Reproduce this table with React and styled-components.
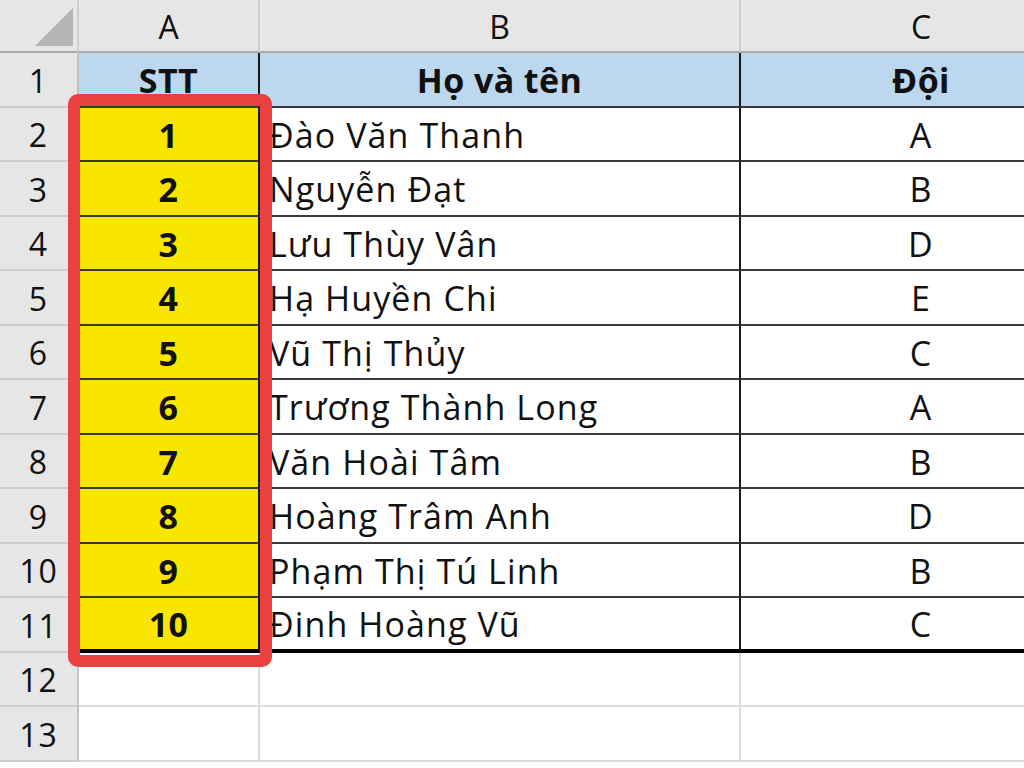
import React from 'react';
import styled, { createGlobalStyle } from 'styled-components';

const GlobalStyle = createGlobalStyle`
  html, body {
    margin: 0;
    padding: 0;
    background: #ffffff;
  }
  * {
    box-sizing: border-box;
  }
`;

const ROW_H = 54.5;

const Viewport = styled.div`
  width: 1024px;
  height: 768px;
  overflow: hidden;
`;

const Sheet = styled.div`
  position: relative;
  display: grid;
  grid-template-columns: 79px 181px 481px 362px;
  grid-template-rows: 53px repeat(13, ${ROW_H}px);
  width: 1103px;
  font-family: "Open Sans", "Noto Sans", sans-serif;
  color: #111;
`;

const Corner = styled.div`
  background: #e6e6e6;
  border-right: 2px solid #cfcfcf;
  border-bottom: 2px solid #a9a9a9;
`;

const ColHead = styled.div`
  background: #e6e6e6;
  border-right: 2px solid #cfcfcf;
  border-bottom: 2px solid #a9a9a9;
  display: flex;
  align-items: center;
  justify-content: center;
  font-size: 32px;
  padding-top: 2px;
`;

const RowHead = styled.div`
  background: #e6e6e6;
  border-right: 2px solid #c4c4c4;
  border-bottom: 2px solid #cdcdcd;
  display: flex;
  align-items: center;
  justify-content: center;
  font-size: 32px;
  letter-spacing: 1px;
  padding-top: 2px;
`;

const Cell = styled.div`
  display: flex;
  align-items: center;
  justify-content: ${p => (p.$align === 'left' ? 'flex-start' : 'center')};
  padding: 2px 0 0 ${p => (p.$align === 'left' ? '9px' : '0')};
  font-size: 34px;
  font-weight: ${p => (p.$bold ? 700 : 400)};
  letter-spacing: ${p => (p.$bold ? '0.4px' : '1.1px')};
  white-space: nowrap;
  background: ${p => p.$bg || '#ffffff'};
  border-right: ${p => (p.$grid ? '2px solid #dcdcdc' : '2px solid #1a1a1a')};
  border-bottom: ${p =>
    p.$grid ? '2px solid #dcdcdc' : p.$last ? '4px solid #000' : '2px solid #3a3a3a'};
`;

const Highlight = styled.div`
  position: absolute;
  left: 68px;
  top: 94px;
  width: 204px;
  height: 573px;
  border: 12px solid #ea4040;
  border-radius: 10px;
  pointer-events: none;
`;

const people = [
  ['Đào Văn Thanh', 'A'],
  ['Nguyễn Đạt', 'B'],
  ['Lưu Thùy Vân', 'D'],
  ['Hạ Huyền Chi', 'E'],
  ['Vũ Thị Thủy', 'C'],
  ['Trương Thành Long', 'A'],
  ['Văn Hoài Tâm', 'B'],
  ['Hoàng Trâm Anh', 'D'],
  ['Phạm Thị Tú Linh', 'B'],
  ['Đinh Hoàng Vũ', 'C'],
];

function SelectAll() {
  return (
    <svg width="79" height="53" style={{ display: 'block' }}>
      <polygon points="73,8 73,46 35,46" fill="#b5b5b5" />
    </svg>
  );
}

export default function App() {
  return (
    <>
      <GlobalStyle />
      <Viewport>
        <Sheet>
          <Corner>
            <SelectAll />
          </Corner>
          <ColHead>A</ColHead>
          <ColHead>B</ColHead>
          <ColHead>C</ColHead>

          <RowHead>1</RowHead>
          <Cell $bold $bg="#bdd7ee">STT</Cell>
          <Cell $bold $bg="#bdd7ee">Họ và tên</Cell>
          <Cell $bold $bg="#bdd7ee">Đội</Cell>

          {people.map(([name, team], i) => {
            const last = i === people.length - 1;
            return (
              <React.Fragment key={name}>
                <RowHead>{i + 2}</RowHead>
                <Cell $bold $bg="#f8e600" $last={last}>{i + 1}</Cell>
                <Cell $align="left" $last={last}>{name}</Cell>
                <Cell $last={last}>{team}</Cell>
              </React.Fragment>
            );
          })}

          {[12, 13].map(n => (
            <React.Fragment key={n}>
              <RowHead>{n}</RowHead>
              <Cell $grid />
              <Cell $grid />
              <Cell $grid />
            </React.Fragment>
          ))}

          <Highlight />
        </Sheet>
      </Viewport>
    </>
  );
}
